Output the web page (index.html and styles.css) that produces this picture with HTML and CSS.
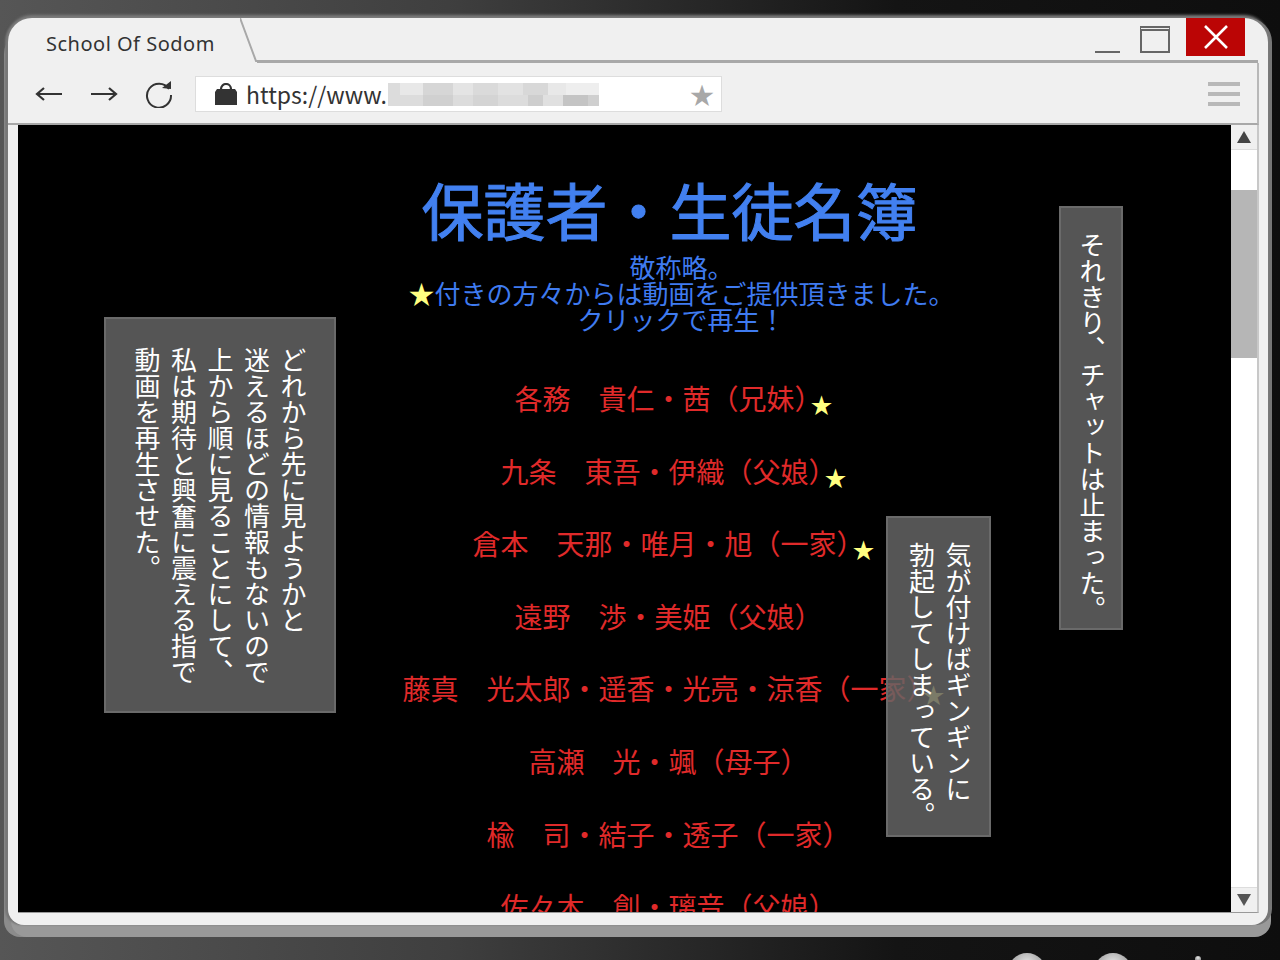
FILE: index.html
```html
<!DOCTYPE html>
<html lang="ja">

<head>
    <meta charset="UTF-8">
    <title>School Of Sodom</title>
    <link rel="stylesheet" href="styles.css">
</head>

<body>
    <div class="window">
        <div class="titlebar">
            <div class="tab">School Of Sodom</div>
            <svg class="tab-edge" width="18" height="44" viewBox="0 0 18 44">
                <path d="M0 0 L16 43 H18" fill="none" stroke="#a8a8a8" stroke-width="2"/>
            </svg>
            <div class="tab-rest">
                <div class="win-min"></div>
                <div class="win-max"></div>
                <div class="win-close">
                    <svg width="26" height="26" viewBox="0 0 26 26">
                        <path d="M2 2 L24 24 M24 2 L2 24" stroke="#fff" stroke-width="2.6" fill="none"/>
                    </svg>
                </div>
            </div>
        </div>

        <div class="toolbar">
            <svg class="nav-icon" width="28" height="16" viewBox="0 0 28 16">
                <path d="M27 8 H2 M9 2 L2 8 L9 14" fill="none" stroke="#333" stroke-width="2.2"/>
            </svg>
            <svg class="nav-icon" width="28" height="16" viewBox="0 0 28 16">
                <path d="M1 8 H26 M19 2 L26 8 L19 14" fill="none" stroke="#333" stroke-width="2.2"/>
            </svg>
            <svg class="nav-icon" width="28" height="28" viewBox="0 0 28 28">
                <path d="M24 9 A12 12 0 1 0 26 15" fill="none" stroke="#333" stroke-width="2"/>
                <path d="M17 8 L26 9 L26 1 Z" fill="#333"/>
            </svg>
            <div class="url-box">
                <svg class="lock" width="24" height="22" viewBox="0 0 24 22">
                    <path d="M7 8 V6 A5 5 0 0 1 17 6 V8" fill="none" stroke="#333" stroke-width="2.2"/>
                    <path d="M3 6 H21 L23 9 V22 H1 V9 Z" fill="#333"/>
                </svg>
                <span class="url-text">https://www.</span>
                <div class="url-blur"></div>
                <span class="url-star">★</span>
            </div>
            <div class="menu-icon">
                <div></div>
                <div></div>
                <div></div>
            </div>
        </div>

        <div class="browser">
            <div class="viewport">
                <div class="page">
                    <h1 class="page-title">保護者・生徒名簿</h1>
                    <p class="page-note">
                        敬称略。<br>
                        <span class="star">★</span>付きの方々からは動画をご提供頂きました。<br>
                        クリックで再生！
                    </p>
                    <ul class="name-list">
                        <li>各務　貴仁・茜（兄妹）<span class="star">★</span></li>
                        <li>九条　東吾・伊織（父娘）<span class="star">★</span></li>
                        <li>倉本　天那・唯月・旭（一家）<span class="star">★</span></li>
                        <li>遠野　渉・美姫（父娘）</li>
                        <li>藤真　光太郎・遥香・光亮・涼香（一家）<span class="star">★</span></li>
                        <li>高瀬　光・颯（母子）</li>
                        <li>楡　司・結子・透子（一家）</li>
                        <li>佐々木　創・璃音（父娘）</li>
                    </ul>
                </div>

                <div class="caption caption-left">どれから先に見ようかと<br>迷えるほどの情報もないので<br>上から順に見ることにして、<br>私は期待と興奮に震える指で<br>動画を再生させた。</div>
                <div class="caption caption-mid">気が付けばギンギンに<br>勃起してしまっている。</div>
                <div class="caption caption-right">それきり、チャットは止まった。</div>
            </div>
            <div class="scrollbar">
                <div class="scroll-btn"><div class="arrow-up"></div></div>
                <div class="scroll-track">
                    <div class="scroll-thumb"></div>
                </div>
                <div class="scroll-btn"><div class="arrow-down"></div></div>
            </div>
        </div>
    </div>

    <div class="ball ball-one"></div>
    <div class="ball ball-two"></div>
    <div class="ball ball-three"></div>
</body>

</html>
```

FILE: styles.css
```css
* {
    margin: 0;
    padding: 0;
    box-sizing: border-box;
}

body {
    width: 1280px;
    height: 960px;
    overflow: hidden;
    position: relative;
    background: linear-gradient(to right, #565656, #3f3f3f 35%, #141414 70%, #0e0e0e);
    font-family: "Noto Sans CJK JP", sans-serif;
}

.window {
    width: 1260px;
    height: 907px;
    margin: 18px 0 0 8px;
    background-color: #f0f0f0;
    border-radius: 24px 24px 16px 16px;
    box-shadow: 0 -3px 3px #7c7c7c, 4px 0 0 #777, -3px 0 2px #777, 3px 12px 0 #999, -4px 12px 0 #8c8c8c;
    overflow: hidden;
}

.titlebar {
    display: flex;
    height: 45px;
    padding-right: 10px;
}

.tab {
    width: 232px;
    padding: 11px 0 0 38px;
    font-family: "Noto Sans", sans-serif;
    font-size: 20px;
    line-height: 30px;
    letter-spacing: 0.5px;
    color: #333;
}

.tab-edge {
    flex-shrink: 0;
}

.tab-rest {
    flex: 1;
    display: flex;
    justify-content: flex-end;
    align-items: flex-start;
    border-bottom: 3px solid #a8a8a8;
    margin-left: -1px;
}

.win-min {
    width: 25px;
    height: 2px;
    margin: 33px 20px 0 0;
    background-color: #666;
}

.win-max {
    width: 30px;
    height: 27px;
    margin: 8px 16px 0 0;
    border: 2px solid #666;
    border-top-width: 5px;
    border-top-style: double;
}

.win-close {
    width: 59px;
    height: 38px;
    margin-right: 13px;
    display: flex;
    align-items: center;
    justify-content: center;
    background-color: #bb0505;
}

.toolbar {
    display: flex;
    align-items: center;
    height: 62px;
    padding-top: 2px;
    padding-left: 27px;
    padding-right: 17px;
    margin-right: 9px;
    border-right: 2px solid #b8b8b8;
    border-bottom: 2px solid #a8a8a8;
}

.nav-icon {
    margin-right: 27px;
}

.nav-icon:nth-child(3) {
    margin-right: 22px;
}

.url-box {
    display: flex;
    align-items: center;
    width: 527px;
    height: 36px;
    padding-left: 18px;
    background-color: #fff;
    border: 1px solid #ddd;
}

.lock {
    margin-right: 8px;
}

.url-text {
    width: 142px;
    font-size: 23px;
    line-height: 30px;
    color: #333;
}

.url-blur {
    width: 211px;
    height: 23px;
    background:
        linear-gradient(to right, #dcdcdc 12px, #e8e8e8 12px 35px, #d6d6d6 35px 65px, #e4e4e4 65px 85px, #dadada 85px 110px, #e2e2e2 110px 135px, #d8d8d8 135px 160px, #e8e8e8 160px 178px, #eeeeee 178px) top / 100% 12px no-repeat,
        linear-gradient(to right, #dcdcdc 35px, #d0d0d0 35px 65px, #dcdcdc 65px 85px, #d4d4d4 85px 110px, #dcdcdc 110px 140px, #cecece 140px 155px, #e0e0e0 155px 175px, #c4c4c4 175px 200px, #cfcfcf 200px) bottom / 100% 11px no-repeat;
}

.url-star {
    margin-left: auto;
    margin-right: 7px;
    font-size: 24px;
    line-height: 30px;
    color: #a8a8a8;
}

.menu-icon {
    margin-left: auto;
    display: flex;
    flex-direction: column;
    gap: 6px;
}

.menu-icon div {
    width: 32px;
    height: 4px;
    background-color: #b8b8b8;
}

.browser {
    display: flex;
    height: 788px;
    margin: 0 9px 0 10px;
    border-right: 2px solid #c8c8c8;
    border-bottom: 1px solid #999;
}

.viewport {
    position: relative;
    flex: 1;
    overflow: hidden;
    background-color: #000;
}

.page {
    padding: 42px 0 0 90px;
    text-align: center;
}

.page-title {
    font-size: 62px;
    line-height: 84px;
    font-weight: 400;
    -webkit-text-stroke: 1px #4280f0;
    color: #4280f0;
}

.page-note {
    margin-top: 3px;
    padding-left: 24px;
    font-size: 26px;
    line-height: 26px;
    color: #3f7bf0;
}

.name-list {
    list-style: none;
    margin-top: 30px;
    margin-left: -2px;
}

.name-list li {
    height: 72.6px;
    font-size: 28px;
    line-height: 72.6px;
    color: #e02a2a;
}

.star {
    color: #ffff80;
}

.name-list .star {
    display: inline-block;
    width: 0;
    margin-left: -12px;
    margin-right: 12px;
    font-size: 22px;
    line-height: 24px;
    vertical-align: -3px;
}

.caption {
    position: absolute;
    writing-mode: vertical-rl;
    background-color: rgba(100, 100, 100, 0.85);
    border: 2px solid #6a6a6a;
    color: #fff;
    font-size: 26px;
    line-height: 36.5px;
}

.caption-left {
    left: 86px;
    top: 192px;
    width: 232px;
    height: 396px;
    padding: 28px 23px 0 0;
}

.caption-mid {
    left: 868px;
    top: 391px;
    width: 105px;
    height: 321px;
    padding: 24px 13px 0 0;
}

.caption-right {
    left: 1041px;
    top: 81px;
    width: 64px;
    height: 424px;
    padding: 24px 11px 0 0;
}

.scrollbar {
    width: 26px;
    display: flex;
    flex-direction: column;
    background-color: #fff;
}

.scroll-btn {
    height: 24px;
    display: flex;
    align-items: center;
    justify-content: center;
    background-color: #f0f0f0;
}

.scroll-track {
    flex: 1;
    padding-top: 40px;
    background-color: #fff;
    border-top: 1px solid #ddd;
    border-bottom: 1px solid #ddd;
}

.scroll-thumb {
    height: 168px;
    background-color: #b6b6b6;
}

.arrow-up {
    border-left: 7px solid transparent;
    border-right: 7px solid transparent;
    border-bottom: 12px solid #444;
}

.arrow-down {
    border-left: 7px solid transparent;
    border-right: 7px solid transparent;
    border-top: 12px solid #555;
}

.ball {
    position: absolute;
    border-radius: 50%;
    background: radial-gradient(circle at 50% 30%, #e8e8e8, #8a8a8a 70%);
}

.ball-one {
    left: 1008px;
    top: 953px;
    width: 38px;
    height: 38px;
}

.ball-two {
    left: 1094px;
    top: 953px;
    width: 38px;
    height: 38px;
}

.ball-three {
    left: 1195px;
    top: 956px;
    width: 6px;
    height: 6px;
}
```
